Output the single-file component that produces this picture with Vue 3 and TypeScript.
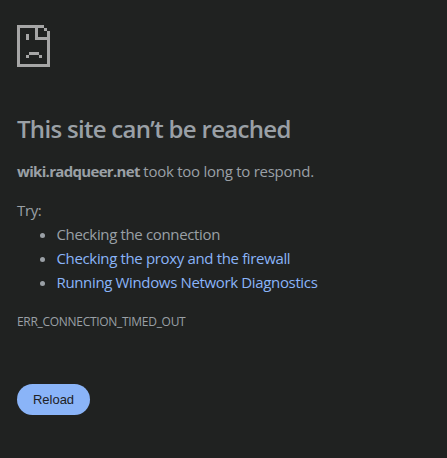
<script setup lang="ts">
interface Suggestion {
  text: string
  link: boolean
  kind: string
}

const suggestions: Suggestion[] = [
  { text: 'Checking the connection', link: false, kind: 'connection' },
  { text: 'Checking the proxy and the firewall', link: true, kind: 'proxy' },
  { text: 'Running Windows Network Diagnostics', link: true, kind: 'diagnostics' },
]
</script>

<template>
  <main class="error-page">
    <svg class="icon" viewBox="0 0 33 42" shape-rendering="crispEdges" aria-hidden="true">
      <path d="M0 0H27V3H3V39H30V15H18V3H21V12H30V6H33V42H0ZM27 3H30V6H27ZM9 9H12V15H9ZM12 27H22V30H12ZM9 30H12V33H9ZM22 30H25V33H22Z" />
    </svg>
    <h1>This site can’t be reached</h1>
    <p class="summary"><strong>wiki.radqueer.net</strong> <span>took too long to respond.</span></p>
    <p class="try">Try:</p>
    <ul>
      <li v-for="item in suggestions" :key="item.kind" :class="item.kind">
        <a v-if="item.link" href="#">{{ item.text }}</a>
        <span v-else>{{ item.text }}</span>
      </li>
    </ul>
    <p class="code">ERR_CONNECTION_TIMED_OUT</p>
    <button type="button">Reload</button>
  </main>
</template>

<style>
body {
  background: #202221;
}
</style>

<style scoped>
.error-page {
  box-sizing: border-box;
  height: 458px;
  padding: 25px 17px 0;
  overflow: hidden;
  background: #202221;
  color: #9aa0a6;
  font: 15px/24px 'Segoe UI', 'Open Sans', sans-serif;
  letter-spacing: -0.35px;
  white-space: nowrap;
}
.icon {
  display: block;
  width: 33px;
  height: 42px;
  fill: #a6a6a6;
}
h1 {
  margin: 47px 0 0;
  font-size: 24px;
  line-height: 29px;
  font-weight: 600;
  letter-spacing: -0.7px;
}
p {
  margin: 0;
}
.summary {
  margin-top: 16px;
}
.summary strong {
  letter-spacing: -0.68px;
}
.summary span {
  letter-spacing: -0.26px;
}
.try {
  margin-top: 15px;
}
ul {
  margin: 0;
  padding: 0 0 0 39.5px;
}
a {
  color: #8ab4f8;
  text-decoration: none;
}
.code {
  margin-top: 16px;
  font-size: 12px;
  letter-spacing: -0.3px;
}
button {
  display: block;
  width: 73px;
  height: 31px;
  margin-top: 50px;
  padding: 0;
  border: 0;
  border-radius: 16px;
  background: #8ab4f8;
  color: #202124;
  font: 13px 'Liberation Sans', Arial, sans-serif;
}
</style>
